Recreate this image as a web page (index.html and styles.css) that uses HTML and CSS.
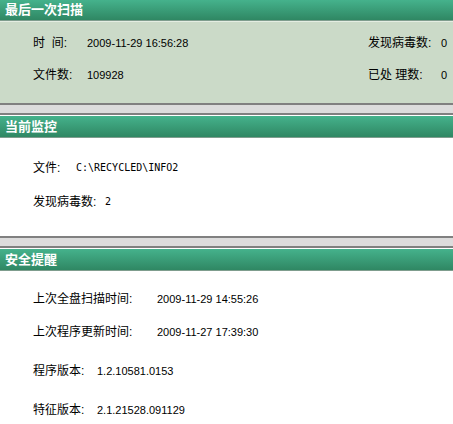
FILE: index.html
```html
<!DOCTYPE html>
<html lang="zh-CN">
  <head>
    <meta charset="UTF-8" />
    <title>扫描状态</title>
    <link rel="stylesheet" href="styles.css">
  </head>
  <body>
    <div class="panel">
      <div class="panel-title first">最后一次扫描</div>
      <div class="panel-body scan-body">
        <div class="scan-row">
          <span class="label w-time">时&nbsp;&nbsp;间:</span>
          <span class="value">2009-11-29 16:56:28</span>
          <span class="right">
            <span class="label w-right">发现病毒数:</span>
            <span class="value">0</span>
          </span>
        </div>
        <div class="scan-row">
          <span class="label w-time">文件数:</span>
          <span class="value">109928</span>
          <span class="right">
            <span class="label w-right">已处&nbsp;理数:</span>
            <span class="value">0</span>
          </span>
        </div>
      </div>
    </div>

    <div class="divider"></div>

    <div class="panel">
      <div class="panel-title">当前监控</div>
      <div class="panel-body monitor-body">
        <div class="row">
          <span class="label w-file">文件:</span>
          <span class="path">C:\RECYCLED\INFO2</span>
        </div>
        <div class="row">
          <span class="label w-count">发现病毒数:</span>
          <span class="path">2</span>
        </div>
      </div>
    </div>

    <div class="divider"></div>

    <div class="panel">
      <div class="panel-title">安全提醒</div>
      <div class="panel-body notice-body">
        <div class="row r1">
          <span class="label w-long">上次全盘扫描时间:</span>
          <span class="value">2009-11-29 14:55:26</span>
        </div>
        <div class="row r2">
          <span class="label w-long">上次程序更新时间:</span>
          <span class="value">2009-11-27 17:39:30</span>
        </div>
        <div class="row r3">
          <span class="label w-ver">程序版本:</span>
          <span class="value">1.2.10581.0153</span>
        </div>
        <div class="row r4">
          <span class="label w-ver">特征版本:</span>
          <span class="value">2.1.21528.091129</span>
        </div>
      </div>
    </div>
  </body>
</html>
```

FILE: styles.css
```css
body {
  margin: 0;
  background-color: white;
  color: black;
  font-family: "Liberation Sans", "Noto Sans CJK SC", sans-serif;
  font-size: 12px;
  line-height: 16px;
  overflow: hidden;
}

.panel-title {
  height: 21px;
  line-height: 21px;
  padding-left: 5px;
  color: white;
  font-size: 13px;
  font-weight: bold;
  background: linear-gradient(#45b28c, #2f8763);
  border-top: 1px solid white;
  border-bottom: 1px solid #7f9d8e;
}

.panel-title.first {
  height: 20px;
  line-height: 20px;
  border-top: none;
}

.panel-body {
  border-top: 1px solid white;
}

.label {
  white-space: pre;
  flex-shrink: 0;
}

.value {
  font-size: 11px;
}

.scan-body {
  background-color: #cbdac8;
  border-top-color: #e4ede2;
  height: 81px;
  padding: 0 6px 0 33px;
}

.scan-row {
  display: flex;
  align-items: center;
  height: 32px;
}

.scan-row:first-child {
  margin-top: 5px;
}

.w-time {
  width: 54px;
}

.w-right {
  width: 73px;
}

.w-file {
  width: 43px;
}

.w-count {
  width: 72px;
}

.w-ver {
  width: 64px;
}

.w-long {
  width: 124px;
}

.right {
  margin-left: auto;
  display: flex;
  align-items: center;
}

.divider {
  height: 8px;
  background-color: #dcdcdc;
  border-top: 2px solid #808080;
  border-bottom: 2px solid #808080;
}

.row {
  display: flex;
  align-items: center;
  height: 16px;
}

.monitor-body {
  height: 97px;
  padding-left: 33px;
}

.monitor-body .row:first-child {
  margin-top: 21px;
}

.monitor-body .row + .row {
  margin-top: 18px;
}

.path {
  font-family: "DejaVu Sans Mono", "Liberation Mono", monospace;
  font-size: 10px;
}

.notice-body {
  padding-left: 33px;
}

.r1 {
  margin-top: 19px;
}

.r2 {
  margin-top: 17px;
}

.r3 {
  margin-top: 23px;
}

.r4 {
  margin-top: 23px;
}
```
